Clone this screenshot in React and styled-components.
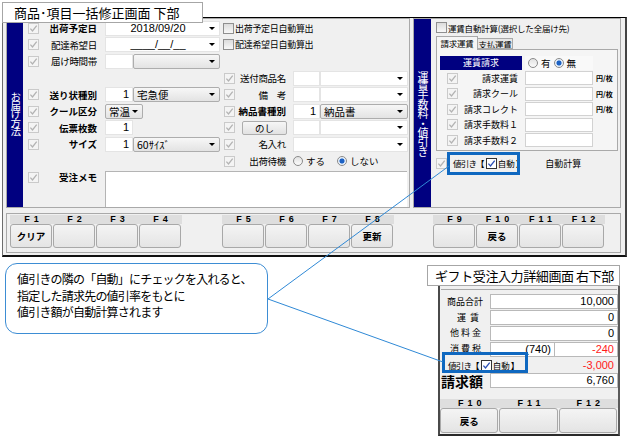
import styled, { createGlobalStyle } from "styled-components"

const JP = `"Noto Sans CJK JP", "Noto Sans", sans-serif`
const NUM = `"Liberation Sans", "Noto Sans CJK JP", sans-serif`

const GlobalStyle = createGlobalStyle`
  html, body { margin: 0; padding: 0; background: #fff; }
  body { font-family: ${JP}; color: #000; }
  * { box-sizing: border-box; }
`

const Canvas = styled.div`
  position: relative;
  width: 628px;
  height: 436px;
  overflow: hidden;
  background: #fff;
`

/* ---------- windows on the canvas ---------- */

const MainWindow = styled.div`
  position: absolute;
  left: 2px;
  top: 17px;
  width: 625px;
  height: 240px;
  background: #f0f0f0;
  border-top: 1px solid #000;
  border-left: 1px solid #6d6d6d;
  border-right: 2px solid #444;
  border-bottom: 2px solid #111;
  padding: 0 4px 0 3px;
  display: flex;
  flex-direction: column;
`

const Body = styled.div`
  display: flex;
  gap: 3px;
  height: 190px;
`

const Panel = styled.div`
  width: ${p => p.$w}px;
  height: 100%;
  border: 1px solid #a9a9a9;
  display: flex;
`

const BlueBar = styled.div`
  flex: none;
  width: ${p => p.$w}px;
  background: #000080;
  color: #fff;
  display: flex;
  align-items: center;
  justify-content: center;
  writing-mode: vertical-rl;
  text-orientation: upright;
  font-size: ${p => p.$fs}px;
  letter-spacing: ${p => p.$ls}px;
  line-height: 1;
`

/* ---------- small controls ---------- */

const CheckBox = styled.span`
  flex: none;
  width: 11px;
  height: 11px;
  display: inline-flex;
  align-items: center;
  justify-content: center;
  border: 1px solid ${p => (p.$state === "on" ? "#333" : p.$state === "off" ? "#8f8f8f" : "#cacaca")};
  background: ${p => (p.$state === "off" ? "linear-gradient(#dcdcdc, #f8f8f8)" : p.$state === "on" ? "#fff" : "#f4f4f4")};
`

const Check = ({ state = "dis" }) => (
  <CheckBox $state={state}>
    {state !== "off" && (
      <svg width="9" height="9" viewBox="0 0 9 9">
        <path
          d="M1.4 4.6 L3.5 6.9 L7.7 1.6"
          fill="none"
          stroke={state === "on" ? "#2b4fb5" : "#b3b3b3"}
          strokeWidth="1.3"
        />
      </svg>
    )}
  </CheckBox>
)

const Radio = styled.span`
  flex: none;
  width: 10px;
  height: 10px;
  border-radius: 50%;
  border: 1px solid #8a8a8a;
  background: ${p =>
    p.$on
      ? "radial-gradient(circle, #1d62c4 0 2.2px, #cfe0f5 2.8px, #f4f8fd 4px)"
      : "linear-gradient(#e2e2e2, #fbfbfb)"};
`

const Arrow = styled.span`
  flex: none;
  width: 0;
  height: 0;
  border-left: 3px solid transparent;
  border-right: 3px solid transparent;
  border-top: 3px solid #000;
`

const Combo = styled.div`
  flex: ${p => (p.$w ? `0 0 ${p.$w}px` : "1 1 auto")};
  height: 15px;
  display: flex;
  align-items: center;
  gap: 2px;
  padding: 0 4px 0 3px;
  border: 1px solid ${p => (p.$raised ? "#adadad" : "#e4e4e4")};
  border-radius: ${p => (p.$raised ? 2 : 0)}px;
  background: ${p => (p.$raised ? "linear-gradient(#f7f7f7, #e3e3e3)" : "#fff")};
`

const ComboText = styled.span`
  flex: 1;
  white-space: nowrap;
  overflow: hidden;
  text-align: ${p => p.$align || "left"};
  font-family: ${p => (p.$num ? NUM : JP)};
  font-size: ${p => (p.$num ? 11 : 10.5)}px;
  line-height: 13px;
`

const Box = styled.div`
  flex: 0 0 ${p => p.$w}px;
  height: 15px;
  background: #fff;
  border: 1px solid #e4e4e4;
  padding: 0 3px;
  text-align: right;
  font: 11px/13px ${NUM};
`

const Fields = styled.div`
  display: flex;
  align-items: center;
`

/* ---------- left panel: お届け方法 ---------- */

const LeftGrid = styled.div`
  flex: 1;
  display: grid;
  grid-template-columns: 22px 60px 115px 18px 55px 115px;
  grid-template-rows: repeat(9, 16.6px) 1fr;
  align-items: center;
  padding-top: 1px;
`

const ChkCell = styled.div`
  display: flex;
  align-items: center;
  height: 16px;
  padding-left: ${p => p.$pl ?? 5}px;
  align-self: ${p => (p.$top ? "start" : "center")};
`

const Label = styled.div`
  font-size: 9.5px;
  font-weight: ${p => (p.$bold ? 700 : 400)};
  letter-spacing: ${p => (p.$bold ? 0 : -0.3)}px;
  text-align: right;
  white-space: nowrap;
  line-height: 16px;
  padding-right: ${p => p.$pr ?? 8}px;
  align-self: ${p => (p.$top ? "start" : "center")};
`

const Blank = styled.span``

const AutoCalc = styled.div`
  grid-column: 4 / 7;
  display: flex;
  align-items: center;
  gap: 1px;
  padding-left: 3px;
  font-size: 9px;
  letter-spacing: -0.3px;
`

const NoshiButton = styled.div`
  margin-left: 4px;
  width: 45px;
  height: 14px;
  border: 1px solid #adadad;
  border-radius: 2px;
  background: linear-gradient(#f6f6f6, #e2e2e2);
  font-size: 9.5px;
  line-height: 12px;
  text-align: center;
`

const RadioGroup = styled.div`
  display: flex;
  align-items: center;
  gap: 3px;
  font-size: 9.5px;
  padding-left: ${p => p.$pl ?? 0}px;
`

const RadioGap = styled.span`
  width: ${p => p.$w}px;
`

const Memo = styled.div`
  grid-column: 3 / 7;
  align-self: stretch;
  margin: 2px 1px 0 0;
  background: #fff;
  border-top: 1px solid #b4b4b4;
  border-left: 1px solid #b4b4b4;
`

/* ---------- right panel: 運賃手数料・値引き ---------- */

const RightBody = styled.div`
  flex: 1;
  display: flex;
  flex-direction: column;
  padding: 1px 0 0 5px;
`

const TopCheck = styled.div`
  height: 15px;
  display: flex;
  align-items: center;
  gap: 1px;
  font-size: 8.5px;
  letter-spacing: -0.2px;
`

const Tabs = styled.div`
  display: flex;
  align-items: flex-end;
  height: 13px;
  margin-top: 1px;
`

const Tab = styled.div`
  position: relative;
  z-index: ${p => (p.$active ? 1 : 0)};
  width: ${p => (p.$active ? 42 : 35)}px;
  height: ${p => (p.$active ? 14 : 11)}px;
  margin-bottom: ${p => (p.$active ? -1 : 0)}px;
  background: ${p => (p.$active ? "#f5f5f5" : "#e6e6e6")};
  border: 1px solid #a9a9a9;
  border-bottom: ${p => (p.$active ? "none" : "1px solid #a9a9a9")};
  border-left: ${p => (p.$active ? "1px solid #a9a9a9" : "none")};
  font-size: 8.5px;
  letter-spacing: -0.3px;
  line-height: ${p => (p.$active ? 12 : 10)}px;
  text-align: center;
  white-space: nowrap;
  overflow: hidden;
`

const TabPanel = styled.div`
  width: 182px;
  height: 102px;
  border: 1px solid #a9a9a9;
  background: #f5f5f5;
  padding: 5px 0 0 3px;
`

const FeeGrid = styled.div`
  display: grid;
  grid-template-columns: 21px 61px 71px 1fr;
  grid-auto-rows: 15.5px;
  align-items: center;
`

const FeeHead = styled.div`
  grid-column: 1 / 3;
  height: 14px;
  background: #000080;
  color: #fff;
  font-size: 9px;
  line-height: 14px;
  text-align: center;
`

const RadioBox = styled(RadioGroup)`
  margin-left: 3px;
  height: 14px;
  background: #f9f9f9;
`

const FeeInput = styled.div`
  margin-left: 3px;
  height: 14px;
  background: #fff;
  border: 1px solid #d2d2d2;
`

const Unit = styled.span`
  padding-left: 3px;
  font-size: 7px;
  font-weight: 700;
  white-space: nowrap;
`

const FeeLabel = styled.div`
  font-size: 9px;
  text-align: right;
  padding-right: 4px;
  white-space: nowrap;
`

const DiscountRow = styled.div`
  display: flex;
  align-items: center;
  height: 14px;
  margin-top: 5px;
  font-size: 9px;
`

const DiscountTag = styled.span`
  flex: none;
  display: inline-flex;
  align-items: center;
  margin-left: ${p => p.$ml ?? 0}px;
  white-space: nowrap;
  font-size: 8.5px;
  letter-spacing: -0.8px;
`

const Bracket = styled.span`
  font-weight: 700;
  letter-spacing: 0;
  margin: ${p => (p.$open ? "0 1px 0 0" : "0 -3px 0 1px")};
`

const AutoLabel = styled.span`
  margin-left: ${p => p.$ml}px;
  letter-spacing: 0;
`

/* ---------- function keys ---------- */

const FBar = styled.div`
  margin-top: 5px;
  height: 40px;
  border: 1px solid #a9a9a9;
  display: flex;
  padding: 1px 0 0 3px;
`

const KeyGroup = styled.div`
  display: flex;
  margin-left: ${p => p.$ml || 0}px;
`

const Key = styled.div`
  display: flex;
  flex-direction: column;
  width: ${p => (p.$w ? `${p.$w}px` : "auto")};
  flex: ${p => (p.$w ? "none" : 1)};
`

const KeyLabel = styled.div`
  height: 9px;
  background: #dedede;
  font: 700 9px/9px ${NUM};
  letter-spacing: 4px;
  padding-left: 4px;
  text-align: center;
  white-space: nowrap;
`

const KeyButton = styled.div`
  margin-right: 1px;
  height: ${p => p.$h || 24}px;
  border: 1px solid #a8a8a8;
  border-radius: 3px;
  background: linear-gradient(#f4f4f4, #e4e4e4);
  display: flex;
  align-items: center;
  justify-content: center;
  font-size: 9.5px;
  font-weight: 700;
`

/* ---------- detail window (bottom right) ---------- */

const DetailWindow = styled.div`
  position: absolute;
  left: 438px;
  top: 282px;
  width: 182px;
  height: 154px;
  background: #f0f0f0;
  border-left: 2px solid #4a4a4a;
  border-right: 2px solid #5a5a5a;
  border-bottom: 2px solid #2a2a2a;
  display: flex;
  flex-direction: column;
`

const DetailTop = styled.div`
  height: 8px;
  border-bottom: 1px solid #a9a9a9;
  margin: 0 1px;
`

const SumGrid = styled.div`
  display: grid;
  grid-template-columns: 43px 8px 127px;
  grid-auto-rows: 15.8px;
  align-items: center;
  padding-top: 4px;
`

const SumLabel = styled.div`
  grid-column: 1 / 2;
  text-align: right;
  white-space: nowrap;
  font-size: ${p => (p.$big ? 14 : 9)}px;
  font-weight: ${p => (p.$big ? 700 : 400)};
  letter-spacing: ${p => p.$ls ?? 0}px;
  line-height: 14px;
`

const SumValue = styled.div`
  grid-column: ${p => p.$col || "3 / 4"};
  display: flex;
  align-items: center;
  height: 15px;
`

const ValueBox = styled.div`
  flex: ${p => (p.$w ? `0 0 ${p.$w}px` : 1)};
  height: 15px;
  background: ${p => (p.$plain ? "transparent" : "#fff")};
  border: 1px solid ${p => (p.$plain ? "transparent" : "#b9b9b9")};
  margin-left: -1px;
  padding: 0 3px;
  text-align: ${p => p.$align || "right"};
  color: ${p => (p.$red ? "#ff1a1a" : "#000")};
  font: 11px/13px ${NUM};
`

const DetailKeys = styled.div`
  display: flex;
  margin-top: auto;
  padding: 0 0 1px 0;
`

/* ---------- annotations ---------- */

const TitleTag = styled.div`
  position: absolute;
  left: ${p => p.$x}px;
  top: ${p => p.$y}px;
  width: ${p => p.$w}px;
  height: 21px;
  padding-left: ${p => p.$pl}px;
  background: #fff;
  border: 1px solid #a6a6a6;
  font-size: 13px;
  line-height: 19px;
  letter-spacing: ${p => p.$ls ?? 0}px;
  white-space: nowrap;
`

const Callout = styled.div`
  position: absolute;
  left: 5px;
  top: 263px;
  width: 263px;
  height: 71px;
  border: 1px solid #3d8dd4;
  border-radius: 12px;
  background: #fff;
  padding: 7px 0 0 11px;
  font-size: 12px;
  line-height: 16.6px;
  letter-spacing: -0.8px;
`

const Highlight = styled.div`
  position: absolute;
  left: ${p => p.$x}px;
  top: ${p => p.$y}px;
  width: ${p => p.$w}px;
  height: ${p => p.$h}px;
  border: 3px solid #0f68c0;
`

const Leader = styled.svg`
  position: absolute;
  left: 0;
  top: 0;
  pointer-events: none;
`

const fees = [
  ["請求運賃", true],
  ["請求クール", true],
  ["請求コレクト", true],
  ["請求手数料１", false],
  ["請求手数料２", false],
]

const groups = [
  { ml: 0, keys: ["F1", "F2", "F3", "F4"], text: ["クリア", "", "", ""] },
  { ml: 40, keys: ["F5", "F6", "F7", "F8"], text: ["", "", "", "更新"] },
  { ml: 39, keys: ["F9", "F10", "F11", "F12"], text: ["", "戻る", "", ""] },
]

const Discount = ({ ml }) => (
  <DiscountTag $ml={ml}>
    値引き<Bracket $open>【</Bracket>
    <Check state="on" />
    <AutoLabel $ml={1}>自動</AutoLabel>
    <Bracket>】</Bracket>
  </DiscountTag>
)

export default function App() {
  return (
    <Canvas>
      <GlobalStyle />

      <MainWindow>
        <Body>
          <Panel $w={404}>
            <BlueBar $w={16} $fs={10.5} $ls={-2}>お届け方法</BlueBar>
            <LeftGrid>
              <ChkCell><Check /></ChkCell>
              <Label $bold>出荷予定日</Label>
              <Combo><ComboText $num $align="center">2018/09/20</ComboText><Arrow /></Combo>
              <AutoCalc><Check state="off" /><span>出荷予定日自動算出</span></AutoCalc>

              <ChkCell><Check /></ChkCell>
              <Label>配達希望日</Label>
              <Combo><ComboText $num $align="center">____/__/__</ComboText><Arrow /></Combo>
              <AutoCalc><Check state="off" /><span>配達希望日自動算出</span></AutoCalc>

              <ChkCell><Check /></ChkCell>
              <Label>届け時間帯</Label>
              <Fields><Box $w={28} /><Combo $raised><ComboText /><Arrow /></Combo></Fields>
              <Blank /><Blank /><Blank />

              <Blank /><Blank /><Blank />
              <ChkCell $pl={4}><Check /></ChkCell>
              <Label $pr={7}>送付商品名</Label>
              <Fields><Box $w={27} /><Combo><ComboText /><Arrow /></Combo></Fields>

              <ChkCell><Check /></ChkCell>
              <Label $bold>送り状種別</Label>
              <Fields><Box $w={28}>1</Box><Combo $raised><ComboText>宅急便</ComboText><Arrow /></Combo></Fields>
              <ChkCell $pl={4}><Check /></ChkCell>
              <Label $pr={7}>備　考</Label>
              <Fields><Box $w={27} /><Combo><ComboText /><Arrow /></Combo></Fields>

              <ChkCell><Check /></ChkCell>
              <Label $bold>クール区分</Label>
              <Fields><Combo $raised $w={37}><ComboText>常温</ComboText><Arrow /></Combo></Fields>
              <ChkCell $pl={4}><Check /></ChkCell>
              <Label $bold $pr={7}>納品書種別</Label>
              <Fields><Box $w={27}>1</Box><Combo $raised><ComboText>納品書</ComboText><Arrow /></Combo></Fields>

              <ChkCell><Check /></ChkCell>
              <Label $bold>伝票枚数</Label>
              <Fields><Box $w={28}>1</Box></Fields>
              <ChkCell $pl={4}><Check /></ChkCell>
              <Fields><NoshiButton>のし</NoshiButton></Fields>
              <Fields><Box $w={27} /><Combo><ComboText /><Arrow /></Combo></Fields>

              <ChkCell><Check /></ChkCell>
              <Label $bold>サイズ</Label>
              <Fields><Box $w={28}>1</Box><Combo $raised><ComboText>60ｻｲｽﾞ</ComboText><Arrow /></Combo></Fields>
              <ChkCell $pl={4}><Check /></ChkCell>
              <Label $pr={7}>名入れ</Label>
              <Fields><Combo><ComboText /><Arrow /></Combo></Fields>

              <Blank /><Blank /><Blank />
              <ChkCell $pl={4}><Check /></ChkCell>
              <Label $pr={7}>出荷待機</Label>
              <RadioGroup>
                <Radio /><span>する</span><RadioGap $w={6} />
                <Radio $on /><span>しない</span>
              </RadioGroup>

              <ChkCell $top><Check /></ChkCell>
              <Label $bold $top>受注メモ</Label>
              <Memo />
            </LeftGrid>
          </Panel>

          <Panel $w={208}>
            <BlueBar $w={17} $fs={11} $ls={-1.6}>運賃手数料・値引き</BlueBar>
            <RightBody>
              <TopCheck><Check state="off" /><span>運賃自動計算(選択した全届け先)</span></TopCheck>
              <Tabs>
                <Tab $active>請求運賃</Tab>
                <Tab>支払運賃</Tab>
              </Tabs>
              <TabPanel>
                <FeeGrid>
                  <FeeHead>運賃請求</FeeHead>
                  <RadioBox $pl={3}>
                    <Radio /><span>有</span><Radio $on /><span>無</span>
                  </RadioBox>
                  <Blank />
                  {fees.map(([name, unit]) => (
                    <FeeRow key={name} name={name} unit={unit} />
                  ))}
                </FeeGrid>
              </TabPanel>
              <DiscountRow>
                <Check />
                <Discount ml={6} />
                <AutoLabel $ml={24}>自動計算</AutoLabel>
              </DiscountRow>
            </RightBody>
          </Panel>
        </Body>

        <FBar>
          {groups.map(g => (
            <KeyGroup key={g.keys[0]} $ml={g.ml}>
              {g.keys.map((k, i) => (
                <Key key={k} $w={43}>
                  <KeyLabel>{k}</KeyLabel>
                  <KeyButton>{g.text[i]}</KeyButton>
                </Key>
              ))}
            </KeyGroup>
          ))}
        </FBar>
      </MainWindow>

      <DetailWindow>
        <DetailTop />
        <SumGrid>
          <SumLabel>商品合計</SumLabel>
          <SumValue><ValueBox>10,000</ValueBox></SumValue>

          <SumLabel $ls={4}>運賃</SumLabel>
          <SumValue><ValueBox>0</ValueBox></SumValue>

          <SumLabel $ls={2}>他料金</SumLabel>
          <SumValue><ValueBox>0</ValueBox></SumValue>

          <SumLabel $ls={2}>消費税</SumLabel>
          <SumValue>
            <ValueBox $w={65}>(740)</ValueBox>
            <ValueBox $red>-240</ValueBox>
          </SumValue>

          <SumValue $col="1 / 4">
            <Discount ml={8} />
            <ValueBox $plain $red>-3,000</ValueBox>
          </SumValue>

          <SumLabel $big>請求額</SumLabel>
          <SumValue><ValueBox>6,760</ValueBox></SumValue>
        </SumGrid>

        <DetailKeys>
          {["F10", "F11", "F12"].map((k, i) => (
            <Key key={k}>
              <KeyLabel>{k}</KeyLabel>
              <KeyButton $h={25}>{i === 0 ? "戻る" : ""}</KeyButton>
            </Key>
          ))}
        </DetailKeys>
      </DetailWindow>

      <TitleTag $x={2} $y={2} $w={201} $pl={11}>商品･項目一括修正画面 下部</TitleTag>
      <TitleTag $x={427} $y={265} $w={193} $pl={7} $ls={-0.4}>ギフト受注入力詳細画面 右下部</TitleTag>

      <Callout>
        <div>値引きの隣の「自動」にチェックを入れると、</div>
        <div>指定した請求先の値引率をもとに</div>
        <div>値引き額が自動計算されます</div>
      </Callout>

      <Highlight $x={447} $y={152} $w={73} $h={23} />
      <Highlight $x={442} $y={352} $w={86} $h={21} />

      <Leader width="628" height="436" viewBox="0 0 628 436">
        <line x1="268" y1="299" x2="449" y2="166" stroke="#2f89d6" strokeWidth="1" />
        <line x1="268" y1="299" x2="443" y2="362" stroke="#2f89d6" strokeWidth="1" />
      </Leader>
    </Canvas>
  )
}

function FeeRow({ name, unit }) {
  return (
    <>
      <ChkCell $pl={7}><Check /></ChkCell>
      <FeeLabel>{name}</FeeLabel>
      <FeeInput />
      <Unit>{unit ? "円/枚" : ""}</Unit>
    </>
  )
}
